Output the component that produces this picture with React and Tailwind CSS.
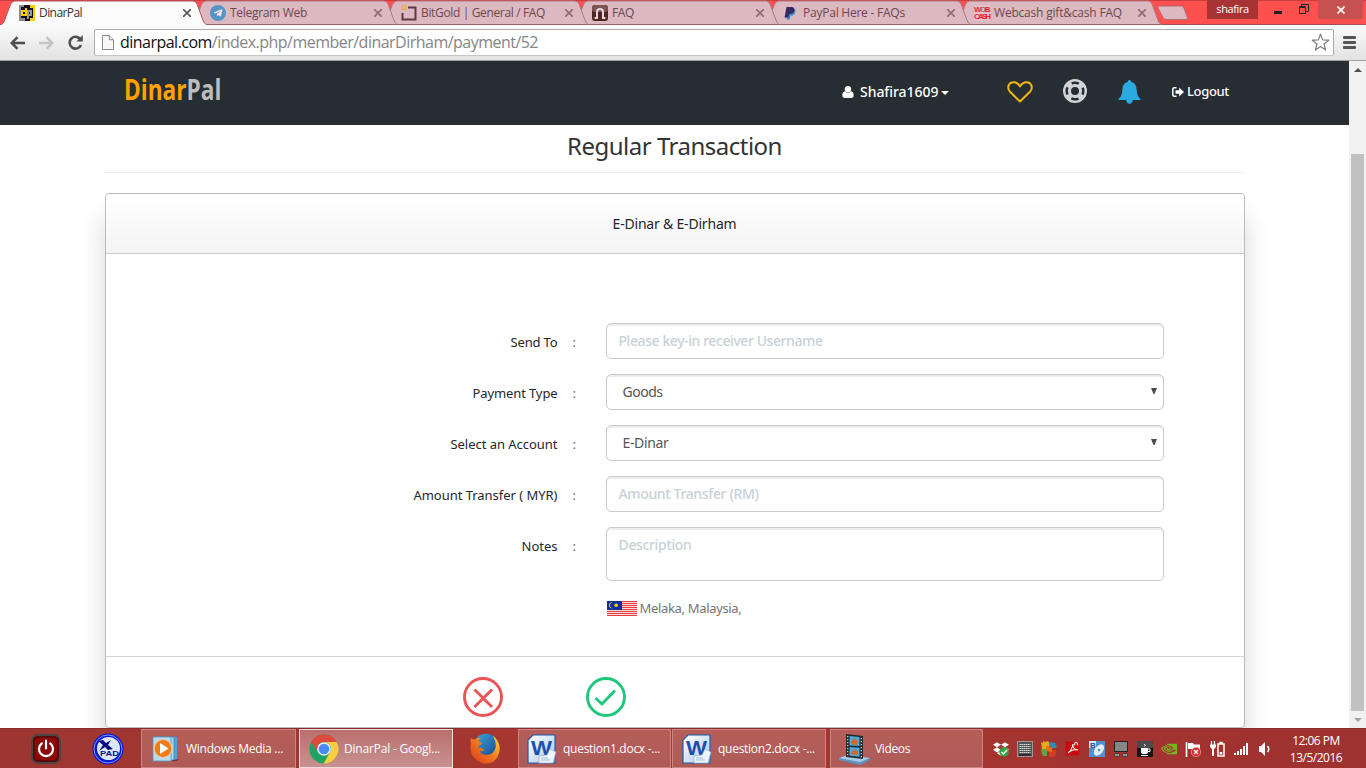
import React from "react";
import { FaDropbox, FaTelegramPlane } from "react-icons/fa";
import { SiNvidia } from "react-icons/si";

const DinarIcon = () => (
  <svg width="16" height="16" viewBox="0 0 16 16" shapeRendering="crispEdges">
    <rect width="16" height="16" fill="#111" />
    <path d="M0 0h5v2H2v11h4v3H0z" fill="#8c8c8c" />
    <path d="M11 0h5v16h-5v-3h3V3h-3z" fill="#ffc800" />
    <path d="M2 5h4V3h2v8H2zM4 7v2h2V7z" fill="#ffc800" fillRule="evenodd" />
    <path d="M8 5h5v6h-3v3H8zM10 7v2h1V7z" fill="#999" fillRule="evenodd" />
  </svg>
);
const TelegramIcon = () => (
  <span className="flex size-4 items-center justify-center rounded-full bg-[#5495c8] pr-px text-[10px] text-[#f5e3e8]">
    <FaTelegramPlane />
  </span>
);
const BitGoldIcon = () => (
  <svg width="16" height="16" viewBox="0 0 16 16" fill="none">
    <path d="M7 2.5h7.5v12h-13V8" stroke="#5c3943" strokeWidth="2" />
    <rect x="1" y="1" width="3.5" height="3.5" stroke="#f0a850" strokeWidth="1.3" />
  </svg>
);
const ArchIcon = () => (
  <svg width="16" height="16" viewBox="0 0 16 16" fill="none">
    <rect width="16" height="16" rx="3" fill="#4c2525" />
    <rect width="16" height="7" rx="3" fill="#7c5454" />
    <path d="M2.500 13H5V7a3 3 0 0 1 6 0v6h2.500" stroke="#ecd5da" strokeWidth="2" />
  </svg>
);
const PaypalIcon = () => (
  <svg width="16" height="16" viewBox="0 0 16 16">
    <path d="M5 4h7q1.200 3.500-1 5.500-1.500 1.300-3.500 1.200L6.800 14.500H3.500z" fill="#3a8fc4" />
    <path d="M3.500 2h5q3.500.3 2.800 3.700-.9 3.300-5 3.200L5.300 12.500H1.500z" fill="#35295f" />
  </svg>
);
const WebcashIcon = () => (
  <span className="flex size-4 flex-col bg-[#eac0c6] pt-px font-['Liberation_Sans',sans-serif] text-[8px] leading-[7px] font-bold tracking-[-1.500px] text-[#e8202e]">
    <span>W<span className="text-[#8a7060]">O</span>B</span>
    <span className="tracking-[-1.900px]">CASH</span>
  </span>
);

const tabs = [
  { title: "DinarPal", icon: DinarIcon, track: "tracking-[-0.57px]", z: "z-20" },
  { title: "Telegram Web", icon: TelegramIcon, track: "tracking-[-0.3px]", z: "z-[6]" },
  { title: "BitGold | General / FAQ", icon: BitGoldIcon, track: "tracking-[-0.35px]", z: "z-[5]" },
  { title: "FAQ", icon: ArchIcon, track: "tracking-[-0.38px]", z: "z-[4]" },
  { title: "PayPal Here - FAQs", icon: PaypalIcon, track: "tracking-[-0.23px]", z: "z-[3]" },
  { title: "Webcash gift&cash FAQ", icon: WebcashIcon, track: "tracking-[-0.2px]", z: "z-[2]" },
];

function Tab({ tab, active }) {
  const Icon = tab.icon;
  return (
    <div className={"relative flex h-[25px] w-[191px] shrink-0 items-center pl-[19px] " + tab.z}>
      <svg className="absolute left-0 top-0" width="208" height="25" viewBox="0 0 208 25">
        <path
          d="M0 25C3 24.500 4 22 5 19L10.500 4.500Q12 1 15 1H193Q196 1 197.200 4.500L202.500 19Q204 24 207 25Z"
          fill={active ? "#fbfbfb" : "#dcb9c1"}
        />
        <path
          d="M0 25C3 24.500 4 22 5 19L10.500 4.500Q12 1 15 1H193Q196 1 197.200 4.500L202.500 19Q204 24 207 25"
          fill="none"
          stroke={active ? "#b5565a" : "#b0787f"}
          strokeWidth="1"
        />
        {!active && <path d="M2 24.500h204" stroke="#96646b" />}
      </svg>
      <span className="relative flex size-4 shrink-0">
        <Icon />
      </span>
      <span className={"relative ml-1 grow whitespace-nowrap text-[12px] leading-4 " + tab.track + (active ? " text-[#333]" : " text-[#6d484f]")}>
        {tab.title}
      </span>
      <svg className="relative" width="8" height="8" viewBox="0 0 8 8">
        <path d="M0 0l8 8M8 0L0 8" stroke={active ? "#555" : "#8f6b72"} strokeWidth="1.600" />
      </svg>
    </div>
  );
}

function TitleBar() {
  return (
    <div className="relative flex h-[25px] border-t border-[#c93d3e] bg-[#ff5050]">
      <div className="absolute bottom-0 left-0 right-0 h-px bg-[#9c5458]" />
      <div className="-mt-px flex">
        {tabs.map((t, i) => (
          <Tab key={t.title} tab={t} active={i === 0} />
        ))}
      </div>
      <svg className="ml-[11px] mt-[4px]" width="34" height="16" viewBox="0 0 34 16">
        <path d="M2.500 1H24Q26 1 27 3L30.500 13Q31 14.500 29 14.500H9Q7 14.500 6 12.500L1 3Q.5 1 2.500 1Z" fill="#dcb9c1" stroke="#b36a70" />
      </svg>
      <div className="-mt-px ml-[16px] flex h-[19px] w-[51px] items-center justify-center bg-[#a83334] text-[11px] tracking-[-0.4px] text-white">
        shafira
      </div>
      <div className="ml-4 mt-[10px] h-[3px] w-2 bg-[#222]" />
      <svg className="ml-[17px] mt-[3px]" width="10" height="10" viewBox="0 0 10 10" fill="none" stroke="#222">
        <path d="M.5 3.500h6v6h-6z" />
        <path d="M.5 2.500h6M2.500 2.500v-2h7v7h-2" />
      </svg>
      <div className="-mt-px ml-[9px] flex h-[19px] w-[45px] items-center justify-center bg-[#c75050]">
        <svg width="8" height="8" viewBox="0 0 8 8">
          <path d="M.5.5l7 7M7.500.5l-7 7" stroke="#fff" strokeWidth="1.700" />
        </svg>
      </div>
    </div>
  );
}

function Toolbar() {
  return (
    <div className="flex h-[36px] items-center border-b border-[#a3a3a3] bg-linear-to-b from-[#fbfbfb] to-[#e2e2e2] pl-[10px]">
      <svg width="15" height="14" viewBox="0 0 15 14" fill="none" stroke="#4e4e4e" strokeWidth="2.500">
        <path d="M15 7H2M7.500 1.200L1.700 7l5.800 5.800" />
      </svg>
      <svg className="ml-[14px]" width="15" height="14" viewBox="0 0 15 14" fill="none" stroke="#c5c5c5" strokeWidth="2.500">
        <path d="M0 7h13M7.500 1.200L13.300 7l-5.800 5.800" />
      </svg>
      <svg className="ml-[14px]" width="15" height="15" viewBox="0 0 15 15" fill="none">
        <path d="M12.500 4.500A5.900 5.900 0 1 0 13 10" stroke="#4e4e4e" strokeWidth="2.600" />
        <path d="M14.800 0v6.500H8.300z" fill="#4e4e4e" />
      </svg>
      <div className="ml-[11px] flex h-[27px] w-[1240px] items-center rounded-[2px] border border-[#ababab] border-b-[#c6c6c6] bg-white pl-[7px] pr-[3px]">
        <svg width="12" height="15" viewBox="0 0 12 15" fill="#f8f8f8" stroke="#8b8b8b">
          <path d="M.5.5h6.800l4.200 4.200v9.800H.5z" />
          <path d="M7.300.5v4.200h4.200" />
        </svg>
        <span className="ml-[6px] grow whitespace-nowrap pb-[2px] text-[16px] leading-6 tracking-[-0.52px] text-[#858585]">
          <span className="text-[#111]">dinarpal.com</span>/index.php/member/dinarDirham/payment/52
        </span>
        <svg width="19" height="19" viewBox="0 0 19 19" fill="#fff" stroke="#7d7d7d" strokeWidth="1.200">
          <path d="M9.500 1.200l2.200 5.700 6 .3-4.700 3.800 1.600 6-5.100-3.400L4.400 17 6 11 1.300 7.200l6-.3z" strokeLinejoin="round" />
        </svg>
      </div>
      <div className="ml-[9px] flex flex-col gap-[2px]">
        <div className="h-[3px] w-[13px] rounded-[1px] bg-[#555]" />
        <div className="h-[3px] w-[13px] rounded-[1px] bg-[#555]" />
        <div className="h-[3px] w-[13px] rounded-[1px] bg-[#555]" />
      </div>
    </div>
  );
}

function SiteHeader() {
  return (
    <header className="flex h-16 items-center bg-[#262d33] pb-[3px] text-white">
      <div className="mb-[5px] ml-[124px] w-[98px] shrink-0 origin-left scale-x-[0.81] whitespace-nowrap font-['Open_Sans',sans-serif] text-[28px] leading-8 font-bold text-[#ffa200]">
        Dinar<span className="text-[#bcbdbf]">Pal</span>
      </div>
      <svg className="ml-[620px]" width="12" height="12" viewBox="0 0 12 12" fill="#fff">
        <circle cx="6" cy="3.200" r="3.200" />
        <path d="M3 5.300Q6 8.300 9 5.300q2.700.5 2.700 4.300 0 2.400-2 2.400H2.300q-2 0-2-2.400Q.3 5.800 3 5.300z" />
      </svg>
      <span className="ml-[6px] w-[79px] whitespace-nowrap text-[14px] font-medium tracking-[-0.05px]">Shafira1609</span>
      <svg className="ml-[2px] mt-[3px]" width="8" height="4" viewBox="0 0 8 4">
        <path d="M0 0h8L4 4z" fill="#fff" />
      </svg>
      <svg className="ml-[58px] mt-px" width="26" height="22" viewBox="0 0 26 22" fill="none" stroke="#f0b90b" strokeWidth="2" strokeLinejoin="round">
        <path d="M13 20.500L3.300 11C.3 8 .8 4.300 3 2.400 5.600.3 9.700.9 11.700 3.700L13 5.500l1.300-1.800c2-2.800 6.100-3.400 8.700-1.300 2.200 1.900 2.700 5.600-.3 8.600z" />
      </svg>
      <svg className="ml-[30px] mb-px" width="24" height="24" viewBox="0 0 24 24" fill="none">
        <circle cx="12" cy="12" r="8" stroke="#d0d4d9" strokeWidth="8" />
        <circle cx="12" cy="12" r="8.300" stroke="#262d33" strokeWidth="2.500" strokeDasharray="7.400 5.638" strokeDashoffset="3.700" />
      </svg>
      <svg className="ml-[31px]" width="23" height="24" viewBox="0 0 22 24" fill="#2ba9e1">
        <path d="M11 0c1 0 1.700.8 1.700 1.700 3.100.8 5 3.300 5.300 6.600.4 5.500 1 8.500 4 10.700V20H0v-1c3-2.200 3.600-5.200 4-10.700.3-3.300 2.200-5.800 5.300-6.600C9.300.8 10 0 11 0zM7.700 20h6.600c-.4 2.800-1.600 3.800-3.300 3.800S8.100 22.800 7.700 20z" />
      </svg>
      <svg className="ml-[31px]" width="12" height="10" viewBox="0 0 12 10" fill="none">
        <path d="M4.500.8H2.300Q.8.800.8 2.300v5.400q0 1.500 1.500 1.500h2.200" stroke="#fff" strokeWidth="1.500" />
        <path d="M3.500 3.200h3.700V.5L12 5 7.200 9.500V6.800H3.500z" fill="#fff" />
      </svg>
      <span className="ml-[3px] text-[13px] font-medium tracking-[-0.34px]">Logout</span>
    </header>
  );
}

const field =
  "w-[558px] rounded-[5px] border border-[#c8cacc] bg-white shadow-[inset_0_2px_0_#ececec] text-[14px] whitespace-nowrap";

function Row({ label, labelClass, children }) {
  return (
    <div className="flex">
      <div className={"h-9 w-[452px] pt-px text-right text-[13px] leading-9 text-[#23282c] " + labelClass}>{label}</div>
      <div className="h-9 w-[48px] pl-[15px] pt-px text-[13px] leading-9 text-[#5d7078]">:</div>
      {children}
    </div>
  );
}

function Select({ value, track }) {
  return (
    <div className={"flex h-9 items-center justify-between pl-4 pr-[6px] pb-px text-[#555] " + field + " " + track}>
      {value}
      <svg className="-mt-px" width="6" height="6" viewBox="0 0 6 6">
        <path d="M0 0h6L3.500 6h-1z" fill="#4a4a4a" />
      </svg>
    </div>
  );
}

function Flag() {
  return (
    <svg width="30" height="15" viewBox="0 0 30 15" shapeRendering="crispEdges">
      <rect width="30" height="15" fill="#fbdcdc" />
      {[0, 2, 4, 6, 8, 10, 12, 14].map((y) => (
        <rect key={y} y={y} width="30" height="1" fill="#e2403f" />
      ))}
      <rect width="15" height="9" fill="#11309a" />
      <path d="M6.500 1.700a2.700 2.700 0 1 0 0 5.100 3 3 0 1 1 0-5.100z" fill="#f7d117" shapeRendering="auto" />
      <circle cx="9.200" cy="4.200" r="1.800" fill="#f7d117" shapeRendering="auto" />
    </svg>
  );
}

function Page() {
  return (
    <main className="w-[1349px] shrink-0 overflow-hidden bg-white font-['Noto_Sans',sans-serif]">
      <SiteHeader />
      <div className="mx-auto w-[1140px]">
        <h1 className="h-12 border-b border-[#eee] text-center text-[24px] leading-[41px] tracking-[-0.5px] text-[#333]">
          Regular Transaction
        </h1>
        <section className="mt-5 flex h-[535px] flex-col rounded-[4px] border border-[#b9bbbc] bg-white shadow-[0_24px_26px_rgba(0,0,0,0.16)]">
          <h2 className="h-[60px] rounded-t-[4px] border-b border-[#cbcbcb] bg-linear-to-b from-white to-[#f4f4f4] text-center text-[14px] leading-[60px] tracking-[-0.2px] text-[#1f2528]">
            E-Dinar &amp; E-Dirham
          </h2>
          <div className="flex h-[402px] flex-col gap-[15px] pt-[69px]">
            <Row label="Send To" labelClass="tracking-[-0.15px]">
              <div className={"h-9 pl-3 leading-[34px] font-medium tracking-[-0.42px] text-[#c9d1d7] " + field}>
                Please key-in receiver Username
              </div>
            </Row>
            <Row label="Payment Type" labelClass="tracking-[-0.11px]">
              <Select value="Goods" track="tracking-[-0.49px]" />
            </Row>
            <Row label="Select an Account" labelClass="tracking-[-0.03px]">
              <Select value="E-Dinar" track="tracking-[-0.35px]" />
            </Row>
            <Row label="Amount Transfer ( MYR)" labelClass="tracking-[-0.03px]">
              <div className={"h-9 pl-3 leading-[34px] font-medium tracking-[-0.35px] text-[#c9d1d7] " + field}>
                Amount Transfer (RM)
              </div>
            </Row>
            <Row label="Notes" labelClass="">
              <div className={"h-[54px] pl-3 leading-[33px] font-medium tracking-[-0.35px] text-[#c9d1d7] " + field}>
                Description
              </div>
            </Row>
            <div className="ml-[501px] mt-[2px] flex h-[21px] items-center gap-[3px] text-[13px] tracking-[-0.33px] text-[#707578]">
              <Flag />
              Melaka, Malaysia,
            </div>
          </div>
          <div className="flex grow border-t border-[#d5d5d5] pl-[357px] pt-5">
            <svg width="40" height="40" viewBox="0 0 40 40" fill="none" stroke="#ea5455" strokeWidth="2.900">
              <circle cx="20" cy="20" r="18.500" />
              <path d="M11.500 12.500l17.500 17.500M29 12.500L11.500 30" />
            </svg>
            <svg className="ml-[83px]" width="40" height="40" viewBox="0 0 40 40" fill="none" stroke="#1ec77b" strokeWidth="2.900">
              <circle cx="20" cy="20" r="18.500" />
              <path d="M9.500 21l6.500 6L29 13.500" />
            </svg>
          </div>
        </section>
      </div>
    </main>
  );
}

function Scrollbar() {
  return (
    <div className="flex w-[17px] flex-col items-center justify-between bg-[#f1f1f1]">
      <div className="flex h-[17px] items-center">
        <svg width="8" height="4" viewBox="0 0 8 4"><path d="M0 4h8L4 0z" fill="#505050" /></svg>
      </div>
      <div className="mt-[76px] w-[13px] grow bg-[#c1c1c1]" />
      <div className="flex h-[17px] items-center">
        <svg width="8" height="4" viewBox="0 0 8 4"><path d="M0 0h8L4 4z" fill="#a3a3a3" /></svg>
      </div>
    </div>
  );
}

const PowerIcon = () => (
  <svg width="30" height="30" viewBox="0 0 30 30" fill="none">
    <rect x="1" y="1" width="28" height="28" rx="6" fill="#8b0909" stroke="#4b4545" strokeWidth="2" />
    <rect x="3" y="3" width="24" height="24" rx="4" stroke="#5c0808" strokeWidth="2" />
    <path d="M10.800 9.500a7 7 0 1 0 8.400 0M15 6.500v8" stroke="#fff" strokeWidth="2.200" strokeLinecap="round" />
  </svg>
);
const XpadIcon = () => (
  <svg width="32" height="32" viewBox="0 0 32 32">
    <circle cx="16" cy="16" r="15.500" fill="#0a17d6" />
    <circle cx="16" cy="16" r="14" fill="none" stroke="#7f9af0" strokeWidth="1" />
    <circle cx="16.500" cy="15.500" r="11.500" fill="#dde8fb" />
    <path d="M6 8l5-1 3 3 5-3-3 5 5 4-5 1-3-3-6 4 4-6z" fill="#06067d" />
    <text x="8" y="23" fill="#0b1190" fontSize="7" fontWeight="700" fontFamily="Liberation Sans, sans-serif" textLength="19" lengthAdjust="spacingAndGlyphs">PAD</text>
  </svg>
);
const MediaIcon = () => (
  <svg width="30" height="28" viewBox="0 0 30 28">
    <path d="M10 2h16v22H10z" fill="#4fa3d4" />
    <path d="M6 2h17v23H6z" fill="#a5d6ee" stroke="#3c88b5" strokeWidth=".8" />
    <path d="M2 2h18v24H2z" fill="#b5dcf0" stroke="#5594b8" strokeWidth=".8" />
    <path d="M22 25q5 0 7-2-2 4-8 3z" fill="#7c302f" />
    <circle cx="12" cy="13.500" r="9" fill="#f07d1a" stroke="#f7c9a3" strokeWidth="1.200" />
    <path d="M9 8v11l8.500-5.500z" fill="#fff" />
  </svg>
);
const ChromeIcon = () => (
  <svg width="30" height="30" viewBox="0 0 30 30">
    <circle cx="15" cy="15" r="14.500" fill="#1da362" />
    <path d="M2.400 7.900A14.500 14.500 0 0 1 27.600 7.900H15a7 7 0 0 0-6.400 9.500z" fill="#dd4b3e" />
    <path d="M27.600 7.900A14.500 14.500 0 0 1 14.500 29.500L21.300 18A7 7 0 0 0 15 7.900z" fill="#ffcd42" />
    <circle cx="15" cy="15" r="6.800" fill="#f2f2f2" />
    <circle cx="15" cy="15" r="5.300" fill="#4a8af4" />
  </svg>
);
const FirefoxIcon = () => (
  <svg width="30" height="31" viewBox="0 0 30 31">
    <defs>
      <linearGradient id="fox" x1="0" y1="1" x2="1" y2="0">
        <stop offset="0" stopColor="#d9361b" />
        <stop offset=".5" stopColor="#f0781c" />
        <stop offset="1" stopColor="#ffd83a" />
      </linearGradient>
      <linearGradient id="globe" x1="0" y1="0" x2="1" y2="1">
        <stop offset="0" stopColor="#39a9e0" />
        <stop offset="1" stopColor="#173f84" />
      </linearGradient>
    </defs>
    <circle cx="16" cy="13.500" r="12.700" fill="url(#globe)" />
    <path d="M1 5q-1 3 0 5-2 10 4 15.500T15 30.500q9 .5 13-7.500 4-9-1-16-1.500-2.500-4-4 3.500 6 2.500 12-2 7-9 7-5 0-7-4 3 1 5-1-3-3-6-2-1-2 2-3l2-2q-3.500-.5-4-3l2.500-2Q7 4 5 6.500 2.500 7 1 5z" fill="url(#fox)" />
  </svg>
);
const WordIcon = () => (
  <svg width="30" height="30" viewBox="0 0 30 30">
    <defs>
      <linearGradient id="wordpage" x1="0" y1="0" x2="1" y2="1">
        <stop offset="0" stopColor="#fff" />
        <stop offset="1" stopColor="#a9c8ec" />
      </linearGradient>
    </defs>
    <path d="M6 1h22v28H1V6z" fill="url(#wordpage)" stroke="#1f5ba8" strokeWidth="1.200" />
    <text x="4" y="20.500" fill="#1c4fae" fontSize="21" fontWeight="700" fontFamily="Liberation Sans, sans-serif" textLength="21" lengthAdjust="spacingAndGlyphs">W</text>
    <path d="M12 22l8-1 3-6 6 3-3 11H12z" fill="#eef5fd" stroke="#8fb0d8" strokeWidth=".7" />
    <path d="M14 24h7M14 26h9" stroke="#8fb0d8" strokeWidth=".8" />
  </svg>
);
const VideosIcon = () => (
  <svg width="32" height="32" viewBox="0 0 32 32">
    <path d="M0 25l9-3 22 3-10 6z" fill="#a8cbe6" />
    <path d="M0 25l21 4 10-4v2l-10 5L0 27z" fill="#5f93c0" />
    <path d="M7 1l17 2v23L7 24z" fill="#23282c" />
    <path d="M10.500 3l10 1v9l-10-.5zM10.500 14l10 .7v9l-10-.9z" fill="#4ba8dd" />
    <path d="M12 9l3-4 4 3-1 4-5-.5zM12 20l3-4 4 3-1 3-5-.5z" fill="#d5662d" />
    <path d="M8.700 3v20M22.300 5v20" stroke="#c9d3da" strokeWidth="1.300" strokeDasharray="1.300 1.700" />
  </svg>
);

const tasks = [
  { label: "Windows Media ...", icon: MediaIcon, box: "ml-[17px] w-[155px] pl-[9px]", gap: "ml-[5px] tracking-[-0.25px]" },
  { label: "DinarPal - Googl...", icon: ChromeIcon, box: "ml-[3px] w-[154px] pl-[9px]", gap: "ml-[5px] tracking-[-0.2px]", active: true },
  { label: null, icon: FirefoxIcon },
  { label: "question1.docx -...", icon: WordIcon, box: "ml-[18px] w-[153px] pl-2", gap: "ml-[6px] tracking-[-0.27px]" },
  { label: "question2.docx -...", icon: WordIcon, box: "ml-px w-[154px] pl-[9px]", gap: "ml-[6px] tracking-[-0.27px]" },
  { label: "Videos", icon: VideosIcon, box: "ml-[4px] w-[153px] pl-2", gap: "ml-[4px] tracking-[-0.37px]" },
];

const tray = [
  <span className="relative flex text-[16px] text-white">
    <FaDropbox />
    <svg className="absolute left-[6px] top-[6px]" width="10" height="10" viewBox="0 0 10 10">
      <circle cx="5" cy="5" r="4.700" fill="#31a546" />
      <path d="M2.500 5l2 2 3.500-4" stroke="#fff" strokeWidth="1.400" fill="none" />
    </svg>
  </span>,
  <svg width="16" height="16" viewBox="0 0 16 16">
    <rect x=".5" y=".5" width="15" height="15" fill="#555" stroke="#999" />
    <path d="M2.500 3.500h11M2.500 5.500h11M2.500 7.500h11M2.500 9.500h11M2.500 11.500h11" stroke="#ddd" strokeDasharray="1.500 .5" />
    <path d="M2 14h12" stroke="#222" strokeWidth="1.500" />
  </svg>,
  <svg width="16" height="16" viewBox="0 0 16 16">
    <path d="M0 1l2 1V0l2 1 2-1 2 1v5H5v2H1z" fill="#e9a91e" />
    <path d="M8 1l7 1-1 2 2 1-1 2h-5V5H8z" fill="#2c8fb8" />
    <path d="M0 8h6v7H2l-1-2z" fill="#5bab3c" />
    <path d="M8 9h7v5l-2 2H8z" fill="#cf3f1f" />
    <path d="M5 5l6 1v5l-6-1z" fill="#e4701f" />
  </svg>,
  <svg width="16" height="16" viewBox="0 0 16 16">
    <rect x=".5" y=".5" width="14" height="14" fill="#c90b0e" />
    <path d="M3 12q4-3 5-9Q7 8 13 9M4 11q4-3 9-2M10 4a1.500 1.500 0 1 1 2 0" stroke="#fff" strokeWidth="1.100" fill="none" />
  </svg>,
  <svg width="16" height="16" viewBox="0 0 16 16">
    <rect width="16" height="16" fill="#4f92d3" />
    <rect x="0" y="0" width="7" height="7" fill="#d9e9f7" />
    <text x="1" y="7" fontSize="8" fontWeight="700" fill="#1f4f9a" fontFamily="Liberation Sans, sans-serif">B</text>
    <ellipse cx="10" cy="9" rx="4" ry="6.500" transform="rotate(38 10 9)" fill="#e7edf3" />
    <circle cx="10" cy="9" r="1.300" fill="#4f92d3" />
  </svg>,
  <svg width="16" height="16" viewBox="0 0 16 16">
    <rect x="1.500" y=".5" width="13" height="10" fill="#868686" stroke="#222" />
    <rect x="1.500" y="12.500" width="5" height="3" rx="1" fill="#999" stroke="#222" strokeWidth=".7" />
    <rect x="9.500" y="12.500" width="5" height="3" rx="1" fill="#999" stroke="#222" strokeWidth=".7" />
  </svg>,
  <svg width="16" height="16" viewBox="0 0 16 16">
    <rect width="16" height="16" rx="1.500" fill="#151515" />
    <rect width="16" height="7" rx="1.500" fill="#4c4c4c" />
    <path d="M4 7h7v4q0 2-2 2H6q-2 0-2-2z" fill="#fff" />
    <path d="M11 8h2v2.500h-2M4 14.500h7M7.500 5.500q1.500-1-.2-2.500" stroke="#fff" fill="none" />
  </svg>,
  <SiNvidia className="size-4 text-[#76b81b]" />,
  <svg width="16" height="16" viewBox="0 0 16 16">
    <path d="M1.500 1v15" stroke="#fff" strokeWidth="1.600" />
    <path d="M3 2h5l1 1.500h6v6H9L8 8H3z" fill="#fff" />
    <circle cx="11" cy="11" r="4.700" fill="#e0262d" stroke="#f6c1c1" strokeWidth=".6" />
    <path d="M9 9l4 4M13 9l-4 4" stroke="#fff" strokeWidth="1.500" />
  </svg>,
  <svg width="16" height="16" viewBox="0 0 16 16" fill="none">
    <path d="M2.500 0v4M5.500 0v4" stroke="#fff" strokeWidth="1.200" />
    <path d="M1 3.500h6V6L5 8v7H3V8L1 6z" fill="#fff" />
    <path d="M9 3h6v12H9zM11 2.500V1.500h2v1" stroke="#fff" strokeWidth="1.500" />
    <path d="M10.700 11h2.600v2.500h-2.600z" fill="#fff" />
  </svg>,
  <svg width="16" height="16" viewBox="0 0 16 16" fill="#fff">
    <path d="M1 12h2v2H1zM4 10h2v4H4zM7 8h2v6H7zM10 5h2v9h-2zM13 2h2v12h-2z" />
  </svg>,
  <svg width="16" height="16" viewBox="0 0 16 16">
    <path d="M2 5h2l4-4v14l-4-4H2z" fill="#fff" />
    <path d="M10.500 5q2.500 3 0 6" stroke="#fff" strokeWidth="1.500" fill="none" />
  </svg>,
];

function Taskbar() {
  return (
    <footer className="flex h-10 items-center border-t border-[#8c2b2b] bg-linear-to-r from-[#9d3632] via-[#a83630] to-[#9e3230] text-[12px] text-white">
      <div className="ml-[31px] flex"><PowerIcon /></div>
      <div className="ml-[31px] flex"><XpadIcon /></div>
      {tasks.map((t) => {
        const Icon = t.icon;
        if (!t.label) return <div key="firefox" className="ml-[17px] flex"><Icon /></div>;
        return (
          <div
            key={t.label}
            className={
              "flex h-[39px] shrink-0 items-center border whitespace-nowrap " + t.box +
              (t.active
                ? " border-[#f1dcdc] bg-linear-to-b from-[#b96f6d] to-[#c79290]"
                : " border-[#cc8583] bg-linear-to-b from-[#b55e59] to-[#ae5b58]")
            }
          >
            <Icon />
            <span className={t.gap}>{t.label}</span>
          </div>
        );
      })}
      <div className="ml-[10px] flex gap-2">
        {tray.map((icon, i) => (
          <span key={i} className="flex size-4 items-center justify-center">{icon}</span>
        ))}
      </div>
      <div className="ml-[14px] flex w-[58px] flex-col items-center text-[12px] leading-[17px] tracking-[-0.5px]">
        <span>12:06 PM</span>
        <span>13/5/2016</span>
      </div>
    </footer>
  );
}

export default function App() {
  return (
    <div className="flex h-[768px] w-[1366px] flex-col overflow-hidden bg-white font-['Open_Sans',sans-serif]">
      <TitleBar />
      <Toolbar />
      <div className="flex h-[667px]">
        <Page />
        <Scrollbar />
      </div>
      <Taskbar />
    </div>
  );
}
